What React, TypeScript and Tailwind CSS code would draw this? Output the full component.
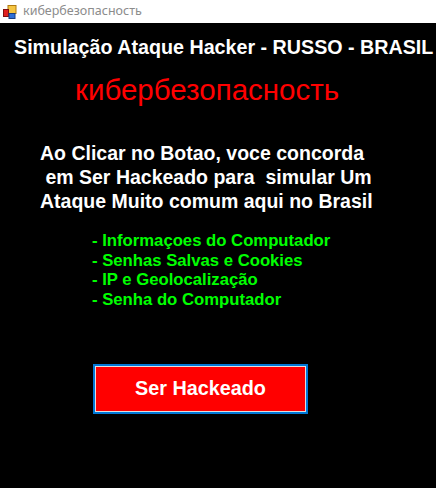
import React from 'react';

const WindowIcon: React.FC = () => (
  <svg width="14" height="14" viewBox="0 0 14 14">
    <rect x="5" y="0.5" width="8" height="8" fill="#f5c542" stroke="#b07a10" />
    <rect x="0.5" y="4.5" width="5" height="7" fill="#e02020" stroke="#801010" />
    <rect x="6" y="8.5" width="6" height="5" fill="#2f6fd6" stroke="#1a3f80" />
  </svg>
);

const items = [
  '- Informaçoes do Computador',
  '- Senhas Salvas e Cookies',
  '- IP e Geolocalização',
  '- Senha do Computador',
];

const App: React.FC = () => {
  return (
    <div className="w-[436px] h-[488px] flex flex-col bg-black" style={{ fontFamily: '"Liberation Sans", Arial, sans-serif' }}>
      {/* Title bar */}
      <div className="h-[23px] bg-white flex items-center pl-[3px] gap-[6px]">
        <WindowIcon />
        <span className="text-[12.5px] text-[#8c8c8c]" style={{ fontFamily: '"Noto Sans", "DejaVu Sans", sans-serif' }}>
          кибербезопасность
        </span>
      </div>

      {/* Body */}
      <div className="flex-1 bg-black">
        <h1 className="mt-[12px] ml-[14px] text-[19.7px] leading-[24px] font-bold text-white whitespace-nowrap">
          Simulação Ataque Hacker - RUSSO - BRASIL
        </h1>

        <p className="mt-[16px] ml-[75px] text-[29.5px] leading-[30px] text-[#ff0000]">кибербезопасность</p>

        <div className="mt-[36px] ml-[40px] text-[19.5px] leading-[24px] font-bold text-white whitespace-pre">
          <p>Ao Clicar no Botao, voce concorda</p>
          <p> em Ser Hackeado para  simular Um</p>
          <p>Ataque Muito comum aqui no Brasil</p>
        </div>

        <ul className="mt-[18px] ml-[92px] text-[16.7px] leading-[19.5px] font-bold text-[#00ff00]">
          {items.map(item => (
            <li key={item}>{item}</li>
          ))}
        </ul>

        <button className="mt-[55px] ml-[93px] w-[215px] h-[50px] border-2 border-[#0078d7] bg-[#e0e0e0] p-[1px] flex">
          <span className="flex-1 bg-[#ff0000] text-white font-bold text-[19.8px] flex items-center justify-center">
            Ser Hackeado
          </span>
        </button>
      </div>
    </div>
  );
};

export default App;
